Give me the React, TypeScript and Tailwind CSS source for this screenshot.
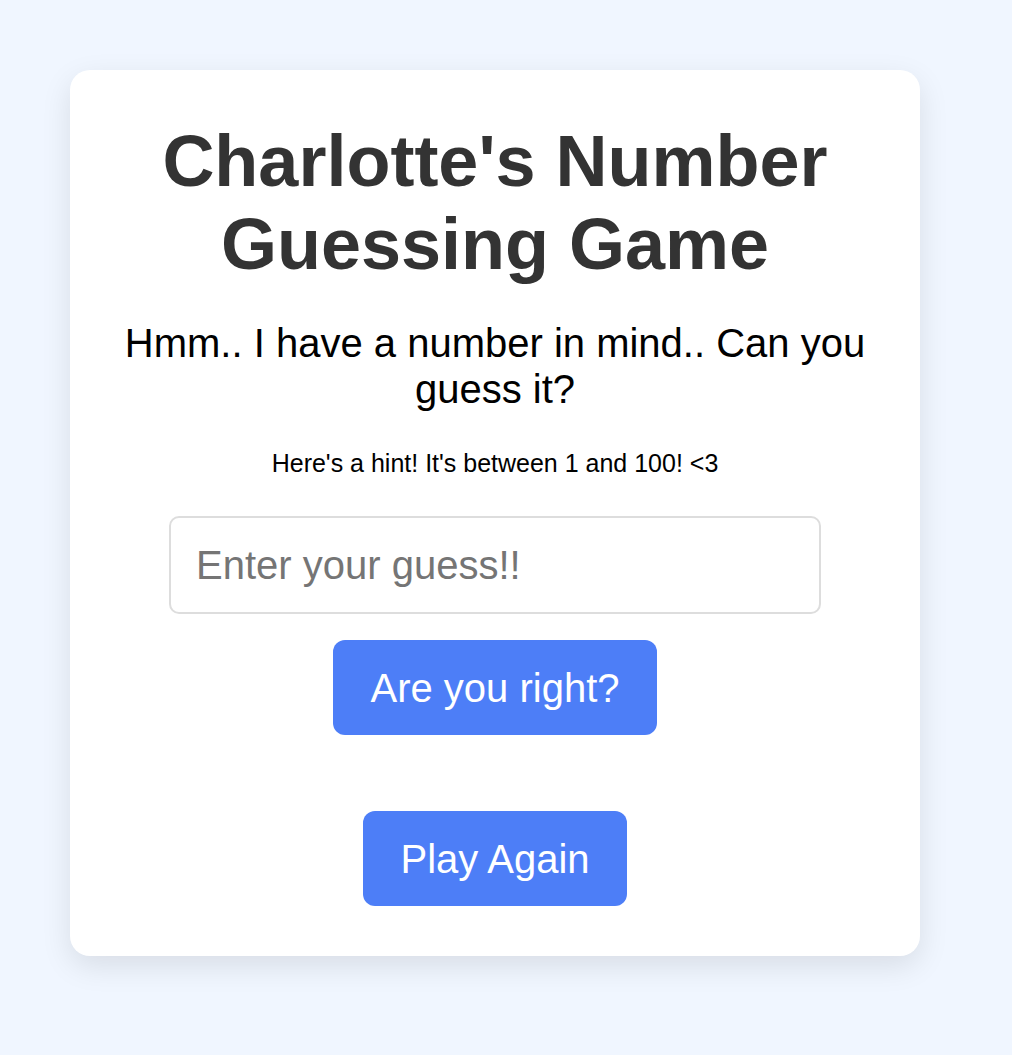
import { useState } from "react"

export default function App() {
  const [guess, setGuess] = useState("")

  return (
    <div className="min-h-[1055px] bg-[#f0f6ff] pt-[70px] pl-[70px] font-['Liberation_Sans',Arial,sans-serif]">
      <div className="w-[850px] rounded-[20px] bg-white p-[50px] text-center shadow-[0_10px_30px_rgba(0,0,0,0.1)]">
        {/* Title */}
        <h1 className="text-[72px] font-bold leading-[1.15] text-[#333333]">
          Charlotte's Number Guessing Game
        </h1>

        <h2 className="mt-[34px] text-[40px] leading-[1.15] text-black">
          Hmm.. I have a number in mind.. Can you guess it?
        </h2>

        <p className="mt-[37px] text-[25px] leading-[1.15] text-black">
          Here's a hint! It's between 1 and 100! &lt;3
        </p>

        <div className="mt-[39px] flex flex-col items-center">
          <input
            type="number"
            value={guess}
            onChange={(e) => setGuess(e.target.value)}
            placeholder="Enter your guess!!"
            className="h-[98px] w-[652px] rounded-[10px] border-2 border-[#dddddd] px-[25px] text-[40px] text-black outline-none placeholder:text-[#757575]"
          />

          <button className="mt-[26px] rounded-[12px] bg-[#4d7ef7] px-[37.5px] py-[24.5px] text-[40px] leading-[1.15] text-white">
            Are you right?
          </button>

          <button className="mt-[76px] rounded-[12px] bg-[#4d7ef7] px-[37.5px] py-[24.5px] text-[40px] leading-[1.15] text-white">
            Play Again
          </button>
        </div>
      </div>
    </div>
  )
}
